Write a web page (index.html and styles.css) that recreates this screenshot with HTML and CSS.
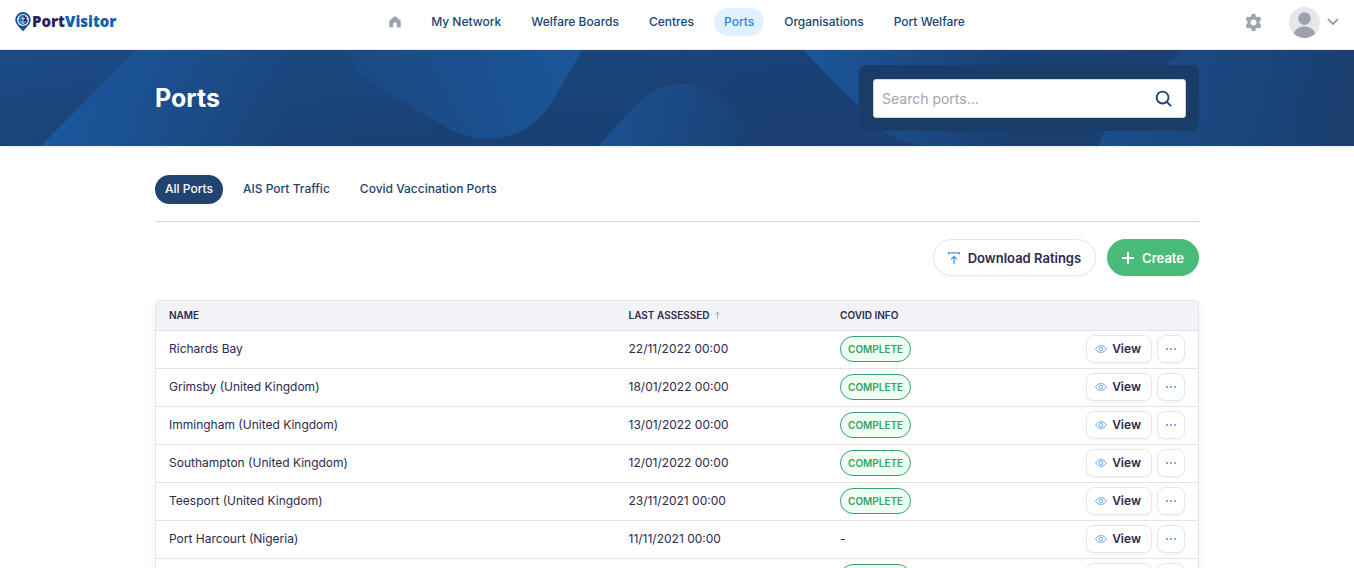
FILE: index.html
```html
<!DOCTYPE html>
<html lang="en">
<head>
    <meta charset="UTF-8">
    <meta name="viewport" content="width=device-width, initial-scale=1.0">
    <title>Ports - PortVisitor</title>
    <link rel="stylesheet" href="styles.css">
</head>
<body>

    <!-- Shared icons -->
    <svg class="sprite" aria-hidden="true">
        <symbol id="icon-eye" viewBox="0 0 12 8">
            <path d="M.6 4C2 1.800 3.800.600 6 .600S10 1.800 11.400 4C10 6.200 8.200 7.400 6 7.400S2 6.200.6 4z"/>
            <circle cx="6" cy="4" r="1.800"/>
        </symbol>
        <symbol id="icon-dots" viewBox="0 0 12 4">
            <circle cx="2" cy="2" r="1"/>
            <circle cx="6" cy="2" r="1"/>
            <circle cx="10" cy="2" r="1"/>
        </symbol>
    </svg>

    <header class="topbar">
        <a href="#" class="logo">
            <svg class="logo-pin" viewBox="0 0 16 20" aria-hidden="true">
                <path fill="#1b4f8f" d="M8 0a7.700 7.700 0 0 0-7.700 7.700C.3 12.500 5 15.500 8 19.500c3-4 7.700-7 7.700-11.800A7.700 7.700 0 0 0 8 0z"/>
                <circle cx="8" cy="8" r="6" fill="#d5e6f5"/>
                <path fill="#1265ad" d="M8 3.200H5.600v1.500H4.200v3H3.200c.3 2.700 2.200 4.700 4.800 5.100z"/>
                <path fill="#29235c" d="M8 3.200h2v1.500h1.600v3h1.200c-.3 2.700-2.200 4.700-4.800 5.100z"/>
                <path fill="none" stroke="#d5e6f5" stroke-width="0.900" d="M8 4.500v7M6 6.500h4M5.500 9.200c.4 1.400 1.200 2 2.500 2s2.100-.6 2.500-2"/>
            </svg>
            <span class="logo-text">Port<span class="logo-accent">Visitor</span></span>
        </a>

        <nav class="main-nav">
            <a href="#" class="nav-link" aria-label="Home">
                <svg class="icon-home" viewBox="0 0 12 12" aria-hidden="true">
                    <path d="M6 .4a1 1 0 0 1 .6.200l4.600 3.700c.3.200.5.600.5 1V10.500a1 1 0 0 1-1 1H8.300a.5.500 0 0 1-.5-.5V8A1.800 1.800 0 0 0 4.200 8v3a.5.500 0 0 1-.5.500H1.300a1 1 0 0 1-1-1V5.300c0-.4.200-.8.500-1L5.400.6A1 1 0 0 1 6 .4z"/>
                </svg>
            </a>
            <a href="#" class="nav-link">My Network</a>
            <a href="#" class="nav-link">Welfare Boards</a>
            <a href="#" class="nav-link">Centres</a>
            <a href="#" class="nav-link active">Ports</a>
            <a href="#" class="nav-link">Organisations</a>
            <a href="#" class="nav-link">Port Welfare</a>
        </nav>

        <div class="user-tools">
            <button type="button" class="plain-button" aria-label="Settings">
                <svg class="icon-cog" viewBox="0 0 20 20" aria-hidden="true">
                    <path fill-rule="evenodd" d="M8.100 1h3.800l.5 2.500 1.600.9 2.400-.8 1.900 3.300-1.900 1.700v2.800l1.900 1.700-1.900 3.300-2.400-.8-1.600.9-.5 2.500H8.100l-.5-2.500-1.600-.9-2.400.8-1.900-3.300 1.900-1.700V8.600L1.700 6.900l1.900-3.300 2.400.8 1.600-.9zM10 6.900a3.100 3.100 0 1 0 0 6.200 3.100 3.100 0 0 0 0-6.200z"/>
                </svg>
            </button>
            <button type="button" class="plain-button account" aria-label="Account">
                <svg class="avatar" viewBox="0 0 31 31" aria-hidden="true">
                    <circle cx="15.500" cy="15.500" r="15.500" fill="#e5e7eb"/>
                    <circle cx="15.500" cy="11.500" r="6.300" fill="#9ca3af"/>
                    <path fill="#9ca3af" d="M4.600 26.500C6.500 22 10.700 19.500 15.500 19.500S24.500 22 26.400 26.500a15.500 15.500 0 0 1-21.800 0z"/>
                </svg>
                <svg class="icon-chevron" viewBox="0 0 12 8" aria-hidden="true">
                    <path d="M1.500 1.500L6 6l4.500-4.500"/>
                </svg>
            </button>
        </div>
    </header>

    <section class="banner">
        <svg class="banner-art" viewBox="0 0 1354 96" preserveAspectRatio="none" aria-hidden="true">
            <defs>
                <linearGradient id="base" x1="0" y1="0" x2="1354" y2="96" gradientUnits="userSpaceOnUse">
                    <stop offset="0" stop-color="#1b4b86"/>
                    <stop offset="0.35" stop-color="#1a457c"/>
                    <stop offset="0.65" stop-color="#1a4176"/>
                    <stop offset="1" stop-color="#1a3f70"/>
                </linearGradient>
                <linearGradient id="fade">
                    <stop offset="0" stop-color="#1b589e"/>
                    <stop offset="1" stop-color="#1b589e" stop-opacity="0"/>
                </linearGradient>
                <linearGradient id="rise">
                    <stop offset="0" stop-color="#1b589e" stop-opacity="0.2"/>
                    <stop offset="1" stop-color="#1b589e" stop-opacity="0.9"/>
                </linearGradient>
                <linearGradient id="shade" x1="0" y1="0" x2="0" y2="1">
                    <stop offset="0" stop-color="#1a3c69" stop-opacity="0"/>
                    <stop offset="1" stop-color="#1a3c69" stop-opacity="0.5"/>
                </linearGradient>
            </defs>
            <rect width="1354" height="96" fill="url(#base)"/>
            <rect width="1354" height="96" fill="url(#shade)"/>
            <path fill="url(#fade)" d="M41 96L118 18Q127 8 138 0H290V96z"/>
            <path fill="url(#rise)" d="M344 0Q352 20 372 34L448 78C490 102 534 84 553 50L582 0z"/>
            <path fill="url(#fade)" opacity="0.7" d="M598 96L636 55Q656 34 684 34Q725 34 760 96z"/>
            <path fill="url(#fade)" opacity="0.9" d="M803 0L880 78Q896 92 925 96H1010V0z"/>
            <path fill="url(#fade)" opacity="0.6" d="M1183 0L1128 50Q1106 70 1099 96H1354V0z"/>
        </svg>
        <div class="container banner-inner">
            <h1>Ports</h1>
            <form class="search-panel">
                <div class="search-box">
                    <input type="search" class="search-input" placeholder="Search ports..." aria-label="Search ports">
                    <button type="submit" class="plain-button" aria-label="Search">
                        <svg class="icon-search" viewBox="0 0 18 18" aria-hidden="true">
                            <circle cx="8" cy="8" r="6.300"/>
                            <path d="M12.500 12.500L16.500 16.500"/>
                        </svg>
                    </button>
                </div>
            </form>
        </div>
    </section>

    <main class="container">
        <nav class="tabs">
            <a href="#" class="tab active">All Ports</a>
            <a href="#" class="tab">AIS Port Traffic</a>
            <a href="#" class="tab">Covid Vaccination Ports</a>
        </nav>

        <div class="actions">
            <button type="button" class="button">
                <svg class="icon-download" viewBox="0 0 12 12" aria-hidden="true">
                    <path d="M.6 2.600V.8h10.800v1.800M6 12V4.500M3.200 7.200L6 4.400l2.800 2.800"/>
                </svg>
                Download Ratings
            </button>
            <button type="button" class="button button-create">
                <svg class="icon-plus" viewBox="0 0 12 12" aria-hidden="true">
                    <path d="M6 0v12M0 6h12"/>
                </svg>
                Create
            </button>
        </div>

        <div class="table-card">
            <table class="ports-table">
                <thead>
                    <tr>
                        <th class="col-name">Name</th>
                        <th class="col-date">Last Assessed
                            <svg class="icon-sort" viewBox="0 0 8 8" aria-hidden="true">
                                <path d="M4 8V1M1 3.800L4 .8l3 3"/>
                            </svg>
                        </th>
                        <th class="col-covid">Covid Info</th>
                        <th class="col-actions"></th>
                    </tr>
                </thead>
                <tbody>
                    <tr>
                        <td>Richards Bay</td>
                        <td>22/11/2022 00:00</td>
                        <td><span class="badge">Complete</span></td>
                        <td>
                            <div class="row-actions">
                                <a href="#" class="row-button"><svg class="icon-eye"><use href="#icon-eye"/></svg>View</a>
                                <button type="button" class="row-button row-button-more" aria-label="More"><svg class="icon-dots"><use href="#icon-dots"/></svg></button>
                            </div>
                        </td>
                    </tr>
                    <tr>
                        <td>Grimsby (United Kingdom)</td>
                        <td>18/01/2022 00:00</td>
                        <td><span class="badge">Complete</span></td>
                        <td>
                            <div class="row-actions">
                                <a href="#" class="row-button"><svg class="icon-eye"><use href="#icon-eye"/></svg>View</a>
                                <button type="button" class="row-button row-button-more" aria-label="More"><svg class="icon-dots"><use href="#icon-dots"/></svg></button>
                            </div>
                        </td>
                    </tr>
                    <tr>
                        <td>Immingham (United Kingdom)</td>
                        <td>13/01/2022 00:00</td>
                        <td><span class="badge">Complete</span></td>
                        <td>
                            <div class="row-actions">
                                <a href="#" class="row-button"><svg class="icon-eye"><use href="#icon-eye"/></svg>View</a>
                                <button type="button" class="row-button row-button-more" aria-label="More"><svg class="icon-dots"><use href="#icon-dots"/></svg></button>
                            </div>
                        </td>
                    </tr>
                    <tr>
                        <td>Southampton (United Kingdom)</td>
                        <td>12/01/2022 00:00</td>
                        <td><span class="badge">Complete</span></td>
                        <td>
                            <div class="row-actions">
                                <a href="#" class="row-button"><svg class="icon-eye"><use href="#icon-eye"/></svg>View</a>
                                <button type="button" class="row-button row-button-more" aria-label="More"><svg class="icon-dots"><use href="#icon-dots"/></svg></button>
                            </div>
                        </td>
                    </tr>
                    <tr>
                        <td>Teesport (United Kingdom)</td>
                        <td>23/11/2021 00:00</td>
                        <td><span class="badge">Complete</span></td>
                        <td>
                            <div class="row-actions">
                                <a href="#" class="row-button"><svg class="icon-eye"><use href="#icon-eye"/></svg>View</a>
                                <button type="button" class="row-button row-button-more" aria-label="More"><svg class="icon-dots"><use href="#icon-dots"/></svg></button>
                            </div>
                        </td>
                    </tr>
                    <tr>
                        <td>Port Harcourt (Nigeria)</td>
                        <td>11/11/2021 00:00</td>
                        <td>-</td>
                        <td>
                            <div class="row-actions">
                                <a href="#" class="row-button"><svg class="icon-eye"><use href="#icon-eye"/></svg>View</a>
                                <button type="button" class="row-button row-button-more" aria-label="More"><svg class="icon-dots"><use href="#icon-dots"/></svg></button>
                            </div>
                        </td>
                    </tr>
                    <tr>
                        <td></td>
                        <td></td>
                        <td><span class="badge">Complete</span></td>
                        <td>
                            <div class="row-actions">
                                <a href="#" class="row-button"><svg class="icon-eye"><use href="#icon-eye"/></svg>View</a>
                                <button type="button" class="row-button row-button-more" aria-label="More"><svg class="icon-dots"><use href="#icon-dots"/></svg></button>
                            </div>
                        </td>
                    </tr>
                </tbody>
            </table>
        </div>
    </main>

</body>
</html>
```
FILE: styles.css
```css
* {
    box-sizing: border-box;
}
html {
    scrollbar-width: none;
}
body {
    margin: 0;
    font-family: Inter, "Liberation Sans", sans-serif;
    font-size: 12px;
    line-height: 16px;
    color: #2d2950;
    background-color: #fff;
}
a {
    color: inherit;
    text-decoration: none;
}
button {
    font: inherit;
    color: inherit;
    cursor: pointer;
}
svg {
    flex: none;
}
.sprite {
    position: absolute;
    width: 0;
    height: 0;
}
.container {
    width: calc(100% - 32px);
    max-width: 1044px;
    margin: 0 auto;
}
.plain-button {
    display: flex;
    align-items: center;
    padding: 0;
    border: none;
    background: none;
}

/* Top bar */
.topbar {
    display: grid;
    grid-template-columns: 1fr auto 1fr;
    align-items: center;
    height: 50px;
    padding: 0 15px 5px;
    border-bottom: 1px solid #eeeff1;
}
.logo {
    display: flex;
    align-items: center;
    gap: 1px;
}
.logo-pin {
    width: 16px;
    height: 20px;
}
.logo-text {
    font-family: "Open Sans", "Noto Sans", sans-serif;
    font-size: 15px;
    font-weight: 800;
    line-height: 18px;
    padding-bottom: 2px;
    color: #29235c;
}
.logo-accent {
    color: #0d62ad;
}
.main-nav {
    display: flex;
    align-items: center;
    gap: 10px;
}
.nav-link {
    padding: 6px 10px;
    border-radius: 14px;
    font-weight: 500;
    color: #20446f;
}
.nav-link.active {
    background-color: #e1f1ff;
    color: #2489e5;
}
.icon-home {
    display: block;
    width: 12px;
    height: 12px;
    fill: #9ca3af;
}
.user-tools {
    display: flex;
    justify-content: flex-end;
    align-items: center;
    gap: 26px;
}
.icon-cog {
    width: 19px;
    height: 19px;
    fill: #9ca3af;
}
.account {
    gap: 7px;
}
.avatar {
    width: 31px;
    height: 31px;
}
.icon-chevron {
    width: 12px;
    height: 8px;
    fill: none;
    stroke: #9ca3af;
    stroke-width: 2;
    stroke-linecap: round;
    stroke-linejoin: round;
}

/* Banner */
.banner {
    position: relative;
    box-shadow: 0 1px 3px rgba(0, 0, 0, 0.1);
}
.banner-art {
    position: absolute;
    inset: 0;
    width: 100%;
    height: 100%;
}
.banner-inner {
    position: relative;
    display: flex;
    justify-content: space-between;
    align-items: center;
    padding: 15px 0;
}
h1 {
    margin: 0;
    font-size: 25px;
    line-height: 32px;
    font-weight: 700;
    color: #fff;
}
.search-panel {
    width: 340px;
    padding: 14px 13px 13px 14px;
    border-radius: 8px;
    background-color: #1a3c69;
}
.search-box {
    display: flex;
    align-items: center;
    height: 39px;
    padding: 0 13px 0 8px;
    border: 1px solid #d2d6dc;
    border-radius: 3px;
    background-color: #fff;
}
.search-input {
    flex: 1;
    min-width: 0;
    padding: 0;
    border: none;
    outline: none;
    font: inherit;
    font-size: 14px;
    color: #2d2950;
}
.search-input::placeholder {
    color: #9fa6b2;
}
.icon-search {
    width: 17px;
    height: 17px;
    fill: none;
    stroke: #20446f;
    stroke-width: 2;
    stroke-linecap: round;
}

/* Tabs */
.tabs {
    display: flex;
    gap: 10px;
    padding: 29px 0 17px;
    border-bottom: 1px solid #d2d3d8;
}
.tab {
    padding: 6px 10px 7px;
    border-radius: 15px;
    font-weight: 500;
    color: #20446f;
}
.tab.active {
    background-color: #20446f;
    color: #fff;
}

/* Buttons over the table */
.actions {
    display: flex;
    justify-content: flex-end;
    gap: 11px;
    padding: 17px 0 24px;
}
.button {
    display: flex;
    align-items: center;
    gap: 8px;
    height: 37px;
    padding: 0 14px;
    border: 1px solid #e5e7eb;
    border-radius: 19px;
    background-color: #fff;
    box-shadow: 0 1px 2px rgba(0, 0, 0, 0.05);
    font-size: 13px;
    font-weight: 600;
}
.button-create {
    border-color: #48bb78;
    background-color: #48bb78;
    color: #fff;
}
.icon-download,
.icon-plus {
    width: 12px;
    height: 12px;
    fill: none;
    stroke: #4299e1;
    stroke-width: 1.3;
}
.icon-plus {
    stroke: #fff;
    stroke-width: 2;
}

/* Table */
.table-card {
    border: 1px solid #e2e4e9;
    border-radius: 4px;
    box-shadow: 0 4px 10px rgba(0, 0, 0, 0.06);
    overflow: hidden;
}
.ports-table {
    width: 100%;
    table-layout: fixed;
    border-collapse: collapse;
}
.ports-table th {
    height: 29px;
    padding: 0 13px;
    background-color: #f2f3f6;
    font-size: 10px;
    font-weight: 600;
    text-align: left;
    text-transform: uppercase;
}
.ports-table td {
    height: 38px;
    padding: 0 13px;
    border-top: 1px solid #e2e4e9;
}
.col-name {
    width: 44.1%;
}
.col-date {
    width: 20.3%;
}
.col-covid {
    width: 15.6%;
}
.icon-sort {
    width: 7px;
    height: 8px;
    margin-left: 2px;
    fill: none;
    stroke: #63b3ed;
}
.badge {
    display: inline-block;
    padding: 4px 7px;
    border: 1px solid #38a169;
    border-radius: 13px;
    background-color: #f0fff4;
    font-size: 10px;
    font-weight: 600;
    text-transform: uppercase;
    color: #38a169;
}
.row-actions {
    display: flex;
    justify-content: flex-end;
    gap: 5px;
}
.row-button {
    display: flex;
    align-items: center;
    gap: 5px;
    height: 28px;
    padding: 0 10px 0 8px;
    border: 1px solid #e5e7eb;
    border-radius: 8px;
    background-color: #fff;
    box-shadow: 0 1px 2px rgba(0, 0, 0, 0.05);
    font-weight: 600;
}
.row-button-more {
    padding: 0 7px;
}
.icon-eye {
    width: 12px;
    height: 8px;
    fill: none;
    stroke: #4299e1;
    stroke-width: 0.8;
}
.icon-dots {
    width: 12px;
    height: 4px;
    fill: #4299e1;
}
```
